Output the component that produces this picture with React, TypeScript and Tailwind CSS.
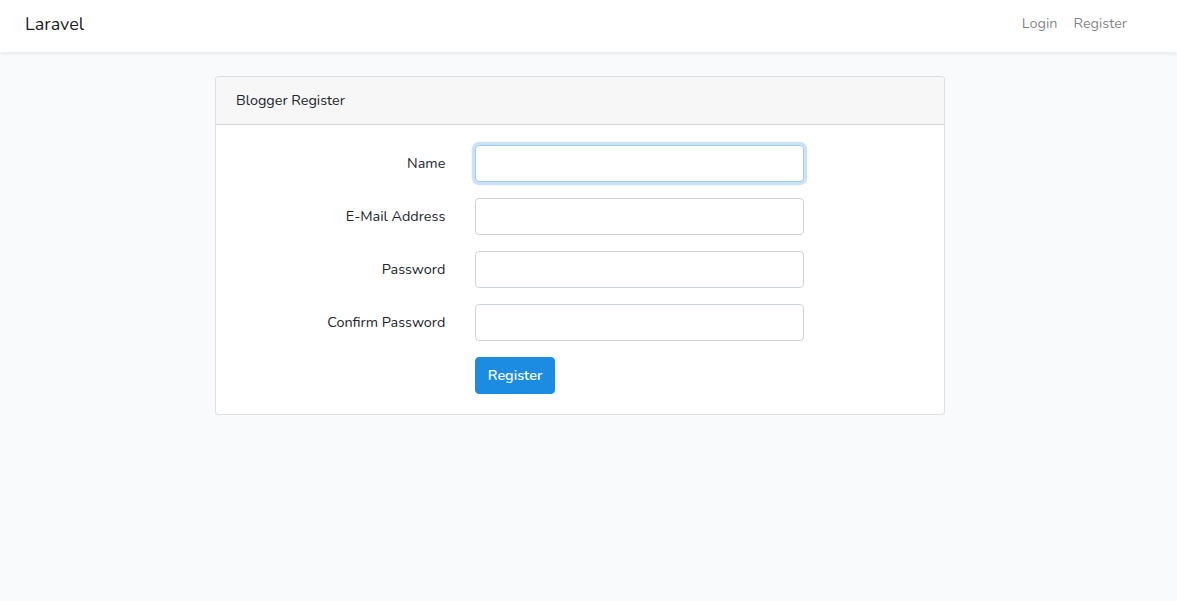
import React from "react";

const font = { fontFamily: "Nunito, Lato, 'Noto Sans', sans-serif" };

function Row({ label, type, focused }: { label: string; type: string; focused?: boolean }) {
  return (
    <div className="flex mb-4">
      <label className="w-[239.33px] shrink-0 px-[15px] text-right pt-[7px] pb-[7px] leading-[1.6] text-[14.4px] text-[#212529]">
        {label}
      </label>
      <div className="w-[359px] shrink-0 px-[15px]">
        <input
          type={type}
          className={
            "block w-full h-[37px] rounded-[4px] border bg-white px-3 outline-none text-[14.4px] " +
            (focused
              ? "border-[#a1cbef] shadow-[0_0_0_3.2px_rgba(52,144,220,0.25)]"
              : "border-[#ced4da]")
          }
        />
      </div>
    </div>
  );
}

export default function App() {
  return (
    <div className="min-h-[601px] bg-[#f8fafc] text-[#212529]" style={font}>
      <nav className="h-[52px] pb-[4px] bg-white shadow-[0_2px_4px_rgba(0,0,0,0.075)] flex items-center justify-between pl-[25px] pr-[42px]">
        <span className="text-[18px] leading-[1.6] text-black/90">Laravel</span>
        <div className="flex text-[14.4px] text-black/50">
          <span className="px-2">Login</span>
          <span className="px-2">Register</span>
        </div>
      </nav>
      <main className="pt-6 flex justify-center">
        <div className="w-[730px] ml-[-17px] bg-white border border-black/[0.125] rounded-[4px] overflow-hidden">
          <div className="h-[48px] bg-[#f7f7f7] border-b border-black/[0.125] px-5 flex items-center text-[14.4px]">
            Blogger Register
          </div>
          <div className="p-5">
            <div className="-mx-[15px]">
              <Row label="Name" type="text" focused />
              <Row label="E-Mail Address" type="email" />
              <Row label="Password" type="password" />
              <Row label="Confirm Password" type="password" />
              <div className="flex">
                <div className="w-[239.33px] shrink-0" />
                <div className="px-[15px]">
                  <button className="h-[37px] px-[11.5px] rounded-[4px] bg-[#1c8ce3] border border-[#1c8ce3] text-white text-[14.4px] font-semibold">
                    Register
                  </button>
                </div>
              </div>
            </div>
          </div>
        </div>
      </main>
    </div>
  );
}
